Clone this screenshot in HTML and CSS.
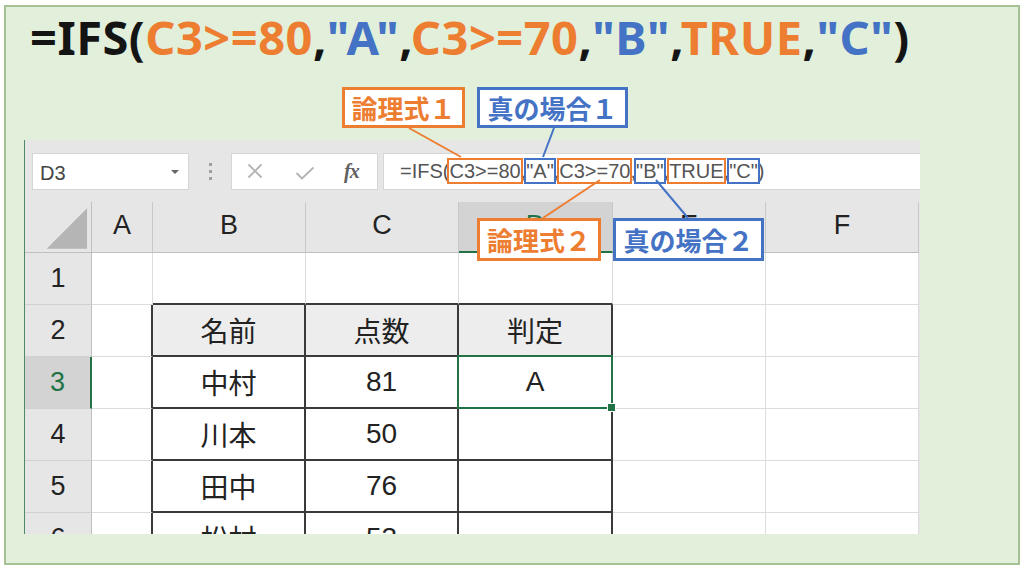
FILE: index.html
```html
<!DOCTYPE html>
<html lang="ja">
<head>
<meta charset="utf-8">
<title>IFS関数</title>
<link rel="stylesheet" href="styles.css">
</head>
<body>
<div class="frame">
  <h1 class="title">=IFS(<span class="o">C3&gt;=80</span>,<span class="b">"A"</span>,<span class="o">C3&gt;=70</span>,<span class="b">"B"</span>,<span class="o">TRUE</span>,<span class="b">"C"</span>)</h1>

  <div class="sheet">
    <div class="toolbar">
      <div class="namebox"><span class="ref">D3</span><span class="caret"></span></div>
      <div class="grip"><i></i><i></i><i></i></div>
      <div class="fxbox">
        <svg class="ico-x" width="16" height="16" viewBox="0 0 16 16"><path d="M1.5 1.5 L14.5 14.5 M14.5 1.5 L1.5 14.5" /></svg>
        <svg class="ico-ok" width="20" height="14" viewBox="0 0 20 14"><path d="M1.5 7 L7 12.5 L18.5 1.5" /></svg>
        <span class="fx">fx</span>
      </div>
      <div class="formula">=IFS(<span class="hl o">C3&gt;=80</span>,<span class="hl b">"A"</span>,<span class="hl o">C3&gt;=70</span>,<span class="hl b">"B"</span>,<span class="hl o">TRUE</span>,<span class="hl b">"C"</span>)</div>
    </div>

    <div class="grid">
      <div class="corner"><svg width="67" height="51" viewBox="0 0 67 51"><polygon points="63,6 63,47 22,47" /></svg></div>
      <div class="ch">A</div>
      <div class="ch">B</div>
      <div class="ch">C</div>
      <div class="ch on">D</div>
      <div class="ch">E</div>
      <div class="ch">F</div>

      <div class="rh">1</div>
      <div class="c"></div>
      <div class="c db"></div>
      <div class="c db"></div>
      <div class="c db"></div>
      <div class="c"></div>
      <div class="c"></div>

      <div class="rh">2</div>
      <div class="c dr"></div>
      <div class="c t th">名前</div>
      <div class="c t th">点数</div>
      <div class="c t th">判定</div>
      <div class="c"></div>
      <div class="c"></div>

      <div class="rh on">3</div>
      <div class="c dr"></div>
      <div class="c t">中村</div>
      <div class="c t">81</div>
      <div class="c t sel">A</div>
      <div class="c"></div>
      <div class="c"></div>

      <div class="rh">4</div>
      <div class="c dr"></div>
      <div class="c t">川本</div>
      <div class="c t">50</div>
      <div class="c t"></div>
      <div class="c"></div>
      <div class="c"></div>

      <div class="rh">5</div>
      <div class="c dr"></div>
      <div class="c t">田中</div>
      <div class="c t">76</div>
      <div class="c t"></div>
      <div class="c"></div>
      <div class="c"></div>

      <div class="rh">6</div>
      <div class="c dr"></div>
      <div class="c t">松村</div>
      <div class="c t">53</div>
      <div class="c t"></div>
      <div class="c"></div>
      <div class="c"></div>
    </div>
  </div>

  <!-- leader lines from the callouts to the formula arguments -->
  <svg class="leaders" width="1024" height="569" viewBox="0 0 1024 569">
    <line class="lo" x1="409" y1="128" x2="461" y2="157" />
    <line class="lb" x1="554" y1="128" x2="543" y2="157" />
    <line class="lo" x1="600" y1="180" x2="543" y2="218" />
    <line class="lb" x1="656" y1="180" x2="688" y2="218" />
  </svg>

  <div class="callout o cond1">論理式１</div>
  <div class="callout b true1">真の場合１</div>
  <div class="callout o cond2">論理式２</div>
  <div class="callout b true2">真の場合２</div>
</div>
</body>
</html>
```

FILE: styles.css
```css
* { box-sizing: border-box; }

html, body {
  margin: 0;
  padding: 0;
  background: #ffffff;
}

.frame {
  position: relative;
  margin: 5px 0 0 4px;
  width: 1016px;
  height: 560px;
  border: 2px solid #a6c295;
  background: #e2efda;
  overflow: visible;
}

/* large formula heading */
.title {
  margin: 7px 0 0 24px;
  height: 47px;
  font: 700 47px/47px "Noto Sans", "Liberation Sans", sans-serif;
  letter-spacing: 0.5px;
  color: #141414;
  white-space: nowrap;
}
.title .o { color: #ed7d31; }
.title .b { color: #4472c4; }

/* spreadsheet window */
.sheet {
  margin: 79px 0 0 18px;
  width: 896px;
  height: 394px;
  overflow: hidden;
  background: #e6e6e6;
  border-left: 1px solid #4f8a66;
  font-family: "Liberation Sans", "Noto Sans CJK JP", sans-serif;
}

.toolbar {
  display: flex;
  align-items: center;
  height: 62px;
  padding-left: 7px;
}

.namebox {
  display: flex;
  align-items: center;
  justify-content: space-between;
  width: 157px;
  height: 37px;
  background: #fff;
  border: 1px solid #d6d6d6;
  padding: 0 9px 0 7px;
}
.namebox .ref {
  font-size: 20px;
  color: #444;
  line-height: 1;
  margin-top: 3px;
}
.caret {
  width: 0;
  height: 0;
  border-left: 4px solid transparent;
  border-right: 4px solid transparent;
  border-top: 4px solid #666;
  margin-top: 2px;
}

.grip {
  width: 42px;
  display: flex;
  flex-direction: column;
  align-items: center;
  gap: 4px;
}
.grip i {
  display: block;
  width: 3px;
  height: 3px;
  background: #a0a0a0;
}

.fxbox {
  display: flex;
  align-items: center;
  width: 147px;
  height: 37px;
  background: #fff;
  border: 1px solid #d6d6d6;
  padding-left: 15px;
}
.fxbox svg path {
  fill: none;
  stroke: #b3b3b3;
  stroke-width: 1.8;
}
.ico-ok { margin-left: 32px; margin-top: 3px; }
.fx {
  margin-left: 29px;
  font: italic 700 20px/1 "Liberation Serif", serif;
  color: #606060;
  letter-spacing: -1px;
}

.formula {
  margin-left: 5px;
  flex: 1;
  height: 37px;
  background: #fff;
  border: 1px solid #d6d6d6;
  border-right: none;
  padding-left: 16px;
  font-size: 20px;
  line-height: 35px;
  color: #555;
  white-space: nowrap;
}
.formula .hl { outline: 2px solid; }
.formula .hl.o { outline-color: #ed7d31; }
.formula .hl.b { outline-color: #4472c4; }

/* cell grid */
.grid {
  display: grid;
  grid-template-columns: 67px 61px 153px 153px 154px 153px 153px;
  grid-template-rows: 51px;
  grid-auto-rows: 52px;
  background: #fff;
  width: 894px;
}
.grid > div {
  display: flex;
  align-items: center;
  justify-content: center;
  border-right: 1px solid #dcdcdc;
  border-bottom: 1px solid #dcdcdc;
  color: #222;
}

.corner {
  background: #e6e6e6;
  border-right-color: #bfbfbf !important;
  border-bottom-color: #bfbfbf !important;
}
.corner svg { display: block; }
.corner polygon { fill: #b5b5b5; }

.ch {
  background: #e6e6e6;
  font-size: 27px;
  border-right-color: #c8c8c8 !important;
  border-bottom-color: #bfbfbf !important;
  padding-bottom: 3px;
}
.ch.on {
  background: #d3d3d3;
  color: #217346 !important;
  border-bottom: 2px solid #217346 !important;
}

.rh {
  background: #e6e6e6;
  font-size: 27px;
  border-right-color: #bfbfbf !important;
  border-bottom-color: #d0d0d0 !important;
}
.rh.on {
  background: #d3d3d3;
  color: #217346 !important;
  border-right: 2px solid #217346 !important;
}

.c { font-size: 28px; }
.grid > .db { border-bottom: 2px solid #3a3a3a; }
.grid > .dr { border-right: 2px solid #3a3a3a; }
.grid > .t {
  border-right: 2px solid #3a3a3a;
  border-bottom: 2px solid #3a3a3a;
}
.grid > .th { background: #ededed; }

.sel { position: relative; }
.sel::after {
  content: "";
  position: absolute;
  top: -2px;
  left: -2px;
  right: -2px;
  bottom: -2px;
  border: 2px solid #217346;
}
.sel::before {
  content: "";
  position: absolute;
  right: -5px;
  bottom: -5px;
  width: 7px;
  height: 7px;
  background: #217346;
  border: 1px solid #fff;
  z-index: 1;
}

/* callouts */
.leaders {
  position: absolute;
  left: -6px;
  top: -7px;
  pointer-events: none;
}
.leaders line { stroke-width: 2; }
.leaders .lo { stroke: #ed7d31; }
.leaders .lb { stroke: #4472c4; }

.callout {
  position: absolute;
  display: flex;
  align-items: center;
  justify-content: center;
  height: 41px;
  background: #fff;
  border: 3px solid;
  font: 700 26px/1 "Noto Sans CJK JP", sans-serif;
  white-space: nowrap;
}
.callout.o { color: #ed7d31; border-color: #ed7d31; }
.callout.b { color: #4472c4; border-color: #4472c4; }

.cond1 { left: 336px; top: 80px; width: 123px; }
.true1 { left: 471px; top: 80px; width: 151px; }
.cond2 { left: 471px; top: 211px; width: 124px; height: 43px; }
.true2 { left: 607px; top: 211px; width: 151px; height: 43px; }
```
